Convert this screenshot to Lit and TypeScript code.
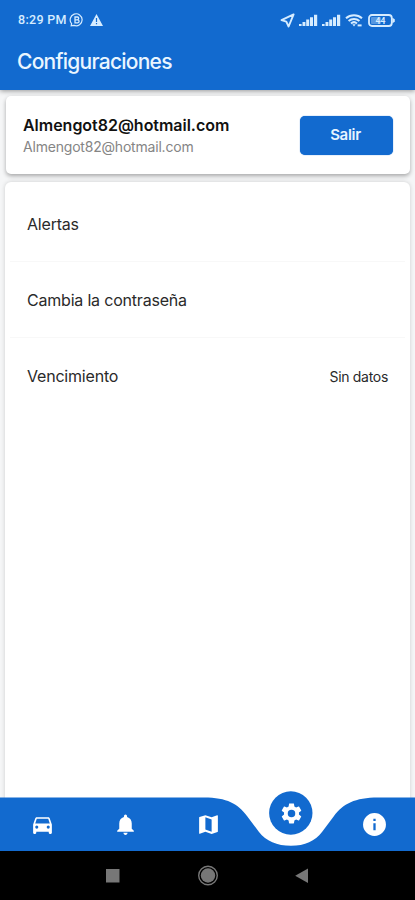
import { LitElement, html, css, svg } from "lit";
import { customElement } from "lit/decorators.js";

const signalBars = () => svg`
  <path d="M0 11h2.6v2H0zM3.5 9h2.9v4H3.5zM7.2 6.5h3V13h-3zM11 4.2h3V13h-3zM15 1.8h3.2V13H15z" fill="currentColor"/>`;

@customElement("status-bar")
class StatusBar extends LitElement {
  static styles = css`
    :host { display: flex; align-items: center; height: 40px; padding: 0 20px 0 18px; color: #d6ecff; box-sizing: border-box; }
    svg { display: block; flex: none; }
    .time { font: 500 12.5px/16px Roboto, sans-serif; letter-spacing: 0.3px; width: 51px; white-space: nowrap; }
    .warning { margin-left: 6px; }
    .right { display: flex; align-items: center; margin-left: auto; }
    .signal { margin-left: 4px; }
    .signal + .signal { margin-left: 4px; }
    .wifi { margin-left: 4px; }
    .battery { margin-left: 5px; }
    .charge { font: 700 8.5px Roboto, sans-serif; }
  `;
  render() {
    return html`
      <span class="time">8:29 PM</span>
      <svg width="15" height="14" viewBox="0 0 15 14" fill="none" stroke="currentColor" stroke-width="1.2">
        <path d="M2.2 12.7l.4-2A6 6 0 1 1 5 12.4z"/>
        <path d="M6 4h2.4q1.3.1 1.3 1.3T8.4 6.8H6zm0 2.8h2.7q1.4.2 1.4 1.5T8.7 9.8H6z" stroke-width="1.3"/>
      </svg>
      <svg class="warning" width="13" height="12" viewBox="0 0 13 12">
        <path fill="currentColor" fill-rule="evenodd" d="M6.5 0L13 12H0zM5.9 4v4h1.2V4zm0 5v1.3h1.2V9z"/>
      </svg>
      <div class="right">
        <svg width="15" height="15" viewBox="0 0 15 15" fill="none" stroke="currentColor" stroke-width="1.9" stroke-linejoin="round">
          <path d="M13.6 1.4L1.5 7.2l4.8 1.5 2.3 4.8z"/>
        </svg>
        <svg class="signal" width="19" height="14" viewBox="0 0 19 14">${signalBars()}</svg>
        <svg class="signal" width="19" height="14" viewBox="0 0 19 14">${signalBars()}</svg>
        <svg class="wifi" width="18" height="15" viewBox="0 0 18 15" fill="none" stroke="currentColor">
          <path d="M1 5.2a12 12 0 0 1 16 0M3.6 8a8 8 0 0 1 10.8 0M6 10.4a4.6 4.6 0 0 1 6 0" stroke-width="2"/>
          <path d="M7.3 11.3h3.4L9 13.6z" fill="currentColor" stroke="none"/>
          <path d="M12.6 12.4h4" stroke-width="2"/>
        </svg>
        <svg class="battery" width="27" height="13" viewBox="0 0 27 13">
          <rect x="1" y="1" width="22.8" height="11" rx="3" fill="none" stroke="currentColor" stroke-width="1.8"/>
          <rect x="3" y="3" width="10" height="7" rx="1" fill="currentColor" opacity=".35"/>
          <path d="M24.4 3.8l2.4 1.4v2.6l-2.4 1.4z" fill="currentColor"/>
          <text class="charge" x="12.4" y="9.6" text-anchor="middle" fill="currentColor">44</text>
        </svg>
      </div>`;
  }
}

@customElement("tab-bar")
class TabBar extends LitElement {
  static styles = css`
    :host { display: block; position: relative; height: 61px; color: #fff; }
    svg { display: block; }
    .shape { position: absolute; inset: 0; }
    .tabs { position: relative; display: grid; grid-template-columns: repeat(5, 1fr); height: 100%; }
    .tab { display: flex; justify-content: center; padding: 22px 0 0 1px; }
    .active { padding-top: 10.5px; }
  `;
  private icon(path: string, active = false) {
    return html`<div class="tab ${active ? "active" : ""}">
      <svg width="25" height="25" viewBox="0 0 24 24" fill="currentColor"><path fill-rule="evenodd" d=${path}/></svg>
    </div>`;
  }
  render() {
    return html`
      <svg class="shape" width="415" height="61" viewBox="0 0 415 61">
        <path fill="#fff" d="M198 0h184v61H198z"/>
        <path fill="#126acf" d="M0 7.6H204C227 7.6 238 14 247 26L259 42C266 51 277 55.8 291 55.8S315 51 322 42L334 26C343 14 355 7.6 378 7.6H415V61H0z"/>
        <circle cx="290.8" cy="23" r="21.7" fill="#126acf"/>
      </svg>
      <div class="tabs">
        ${this.icon("M18.92 6.01C18.72 5.42 18.16 5 17.5 5h-11c-.66 0-1.21.42-1.42 1.01L3 12v8c0 .55.45 1 1 1h1c.55 0 1-.45 1-1v-1h12v1c0 .55.45 1 1 1h1c.55 0 1-.45 1-1v-8zM6.5 16a1.5 1.5 0 1 1 0-3 1.5 1.5 0 0 1 0 3zm11 0a1.5 1.5 0 1 1 0-3 1.5 1.5 0 0 1 0 3zM5 11l1.5-4.5h11L19 11z")}
        ${this.icon("M12 22c1.1 0 2-.9 2-2h-4c0 1.1.89 2 2 2zm6-6v-5c0-3.07-1.64-5.64-4.5-6.32V4a1.5 1.5 0 0 0-3 0v.68C7.63 5.36 6 7.92 6 11v5l-2 2v1h16v-1z")}
        ${this.icon("M20.5 3l-.16.03L15 5.1 9 3 3.36 4.9c-.21.07-.36.25-.36.48V20.5c0 .28.22.5.5.5l.16-.03L9 18.9l6 2.1 5.64-1.9c.21-.07.36-.25.36-.48V3.5c0-.28-.22-.5-.5-.5zM15 19l-6-2.11V5l6 2.11z")}
        ${this.icon("M19.14 12.94c.04-.3.06-.61.06-.94 0-.32-.02-.64-.07-.94l2.03-1.58c.18-.14.23-.41.12-.61l-1.92-3.32c-.12-.22-.37-.29-.59-.22l-2.39.96c-.5-.38-1.03-.7-1.62-.94l-.36-2.54c-.04-.24-.24-.41-.48-.41h-3.84c-.24 0-.43.17-.47.41l-.36 2.54c-.59.24-1.13.57-1.62.94l-2.39-.96c-.22-.08-.47 0-.59.22L2.74 8.87c-.12.21-.08.47.12.61l2.03 1.58c-.05.3-.09.63-.09.94s.02.64.07.94l-2.03 1.58c-.18.14-.23.41-.12.61l1.92 3.32c.12.22.37.29.59.22l2.39-.96c.5.38 1.03.7 1.62.94l.36 2.54c.05.24.24.41.48.41h3.84c.24 0 .44-.17.47-.41l.36-2.54c.59-.24 1.13-.56 1.62-.94l2.39.96c.22.08.47 0 .59-.22l1.92-3.32c.12-.22.07-.47-.12-.61zM12 15.6A3.6 3.6 0 1 1 12 8.4a3.6 3.6 0 0 1 0 7.2z", true)}
        ${this.icon("M12 1a11 11 0 1 0 0 22 11 11 0 0 0 0-22zm1.1 16.5h-2.2v-6.6h2.2zm0-8.8h-2.2V6.5h2.2z")}
      </div>`;
  }
}

@customElement("app-root")
class AppRoot extends LitElement {
  static styles = css`
    :host { display: flex; flex-direction: column; width: 415px; height: 900px; overflow: hidden; background: #f5f6f7; font-family: Inter, sans-serif; color: #2a2a2a; box-sizing: border-box; }
    * { box-sizing: border-box; }
    .header { flex: none; height: 90px; background: #126acf; box-shadow: 0 1px 5px rgba(0, 0, 0, 0.4); z-index: 1; }
    .title { margin: 0; padding: 1px 0 0 17px; font: 500 21px/42px Inter, sans-serif; letter-spacing: -0.75px; color: #eaf6ff; }
    .text { white-space: nowrap; }
    .account { flex: none; display: flex; align-items: center; justify-content: space-between; height: 78px; margin: 6px 5px 0 6px; padding: 0 17px; background: #fff; border-radius: 5px; box-shadow: 0 2px 4px rgba(0, 0, 0, 0.32); z-index: 1; }
    .name { font-size: 16px; line-height: 22px; font-weight: 600; color: #111; letter-spacing: -0.02px; }
    .email { font-size: 14px; line-height: 21px; color: #858585; letter-spacing: -0.2px; }
    .logout { width: 93px; height: 39px; border: 0; border-radius: 5px; background: #126acf; color: #e6f4ff; font: 600 15px/37px Inter, sans-serif; letter-spacing: -0.3px; padding: 0 2px 1px 0; box-shadow: 0 0 1px #126acf; }
    .panel { flex: 1; margin: 8px 5px -61px; padding: 4px 0 0; background: #fff; border-radius: 6px 6px 0 0; box-shadow: 0 0 4px rgba(0, 0, 0, 0.17); }
    .row { display: flex; align-items: center; justify-content: space-between; height: 76px; margin: 0 5px; padding: 0 17px; border-bottom: 1px solid #f8f8f8; }
    .row:last-child { border-bottom: 0; }
    .label { font-size: 16px; letter-spacing: -0.2px; }
    .value { font-size: 14px; letter-spacing: -0.3px; }
    tab-bar { flex: none; z-index: 2; }
    .system { flex: none; display: flex; justify-content: center; height: 49px; background: #000; z-index: 2; }
    .system svg { display: block; }
  `;
  render() {
    return html`
      <header class="header">
        <status-bar></status-bar>
        <h1 class="title">Configuraciones</h1>
      </header>
      <section class="account">
        <div>
          <div class="text name">Almengot82@hotmail.com</div>
          <div class="text email">Almengot82@hotmail.com</div>
        </div>
        <button class="logout">Salir</button>
      </section>
      <main class="panel">
        <div class="row"><span class="text label">Alertas</span></div>
        <div class="row"><span class="text label">Cambia la contraseña</span></div>
        <div class="row"><span class="text label">Vencimiento</span><span class="text value">Sin datos</span></div>
      </main>
      <tab-bar></tab-bar>
      <nav class="system">
        <svg width="415" height="49" viewBox="0 0 415 49" fill="#777">
          <rect x="106" y="18" width="13.5" height="13.5"/>
          <circle cx="208" cy="24.5" r="7.2"/>
          <circle cx="208" cy="24.5" r="9.3" fill="none" stroke="#777" stroke-width="1.4"/>
          <path d="M308 17.5v14.5l-12.8-7.2z"/>
        </svg>
      </nav>`;
  }
}
